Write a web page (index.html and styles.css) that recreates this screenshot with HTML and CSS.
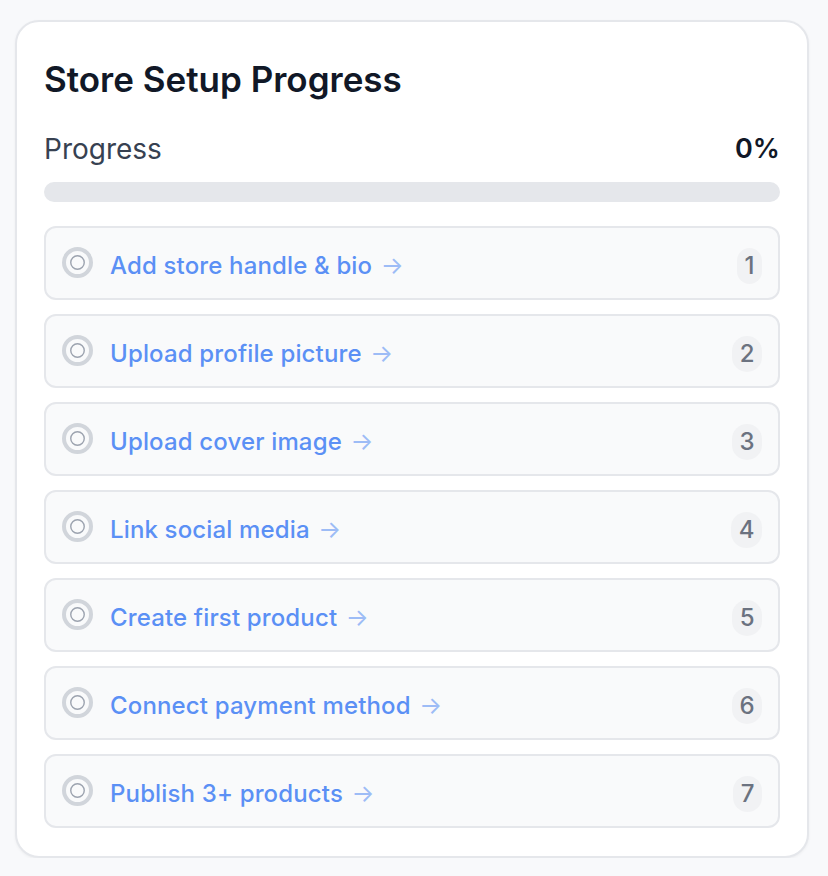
FILE: index.html
```html
<!DOCTYPE html>
<html lang="en">
<head>
<meta charset="utf-8">
<title>Store Setup Progress</title>
<link rel="stylesheet" href="styles.css">
</head>
<body>
<section class="card">
  <h2 class="title">Store Setup Progress</h2>
  <div class="progress-row">
    <span class="progress-label">Progress</span>
    <span class="progress-value">0%</span>
  </div>
  <div class="bar"><div class="bar-fill" style="width:0%"></div></div>
  <ul class="steps">
    <li class="step">
      <svg class="step-icon" width="31" height="31" viewBox="0 0 31 31"><circle cx="15.5" cy="15.5" r="13.5" fill="none" stroke="#d1d5db" stroke-width="4"/><circle cx="15.5" cy="15.5" r="6.75" fill="none" stroke="#9ca3af" stroke-width="1.4"/></svg>
      <a class="step-link" href="#">Add store handle &amp; bio <span class="arrow">→</span></a>
      <span class="badge">1</span>
    </li>
    <li class="step">
      <svg class="step-icon" width="31" height="31" viewBox="0 0 31 31"><circle cx="15.5" cy="15.5" r="13.5" fill="none" stroke="#d1d5db" stroke-width="4"/><circle cx="15.5" cy="15.5" r="6.75" fill="none" stroke="#9ca3af" stroke-width="1.4"/></svg>
      <a class="step-link" href="#">Upload profile picture <span class="arrow">→</span></a>
      <span class="badge">2</span>
    </li>
    <li class="step">
      <svg class="step-icon" width="31" height="31" viewBox="0 0 31 31"><circle cx="15.5" cy="15.5" r="13.5" fill="none" stroke="#d1d5db" stroke-width="4"/><circle cx="15.5" cy="15.5" r="6.75" fill="none" stroke="#9ca3af" stroke-width="1.4"/></svg>
      <a class="step-link" href="#">Upload cover image <span class="arrow">→</span></a>
      <span class="badge">3</span>
    </li>
    <li class="step">
      <svg class="step-icon" width="31" height="31" viewBox="0 0 31 31"><circle cx="15.5" cy="15.5" r="13.5" fill="none" stroke="#d1d5db" stroke-width="4"/><circle cx="15.5" cy="15.5" r="6.75" fill="none" stroke="#9ca3af" stroke-width="1.4"/></svg>
      <a class="step-link" href="#">Link social media <span class="arrow">→</span></a>
      <span class="badge">4</span>
    </li>
    <li class="step">
      <svg class="step-icon" width="31" height="31" viewBox="0 0 31 31"><circle cx="15.5" cy="15.5" r="13.5" fill="none" stroke="#d1d5db" stroke-width="4"/><circle cx="15.5" cy="15.5" r="6.75" fill="none" stroke="#9ca3af" stroke-width="1.4"/></svg>
      <a class="step-link" href="#">Create first product <span class="arrow">→</span></a>
      <span class="badge">5</span>
    </li>
    <li class="step">
      <svg class="step-icon" width="31" height="31" viewBox="0 0 31 31"><circle cx="15.5" cy="15.5" r="13.5" fill="none" stroke="#d1d5db" stroke-width="4"/><circle cx="15.5" cy="15.5" r="6.75" fill="none" stroke="#9ca3af" stroke-width="1.4"/></svg>
      <a class="step-link" href="#">Connect payment method <span class="arrow">→</span></a>
      <span class="badge">6</span>
    </li>
    <li class="step">
      <svg class="step-icon" width="31" height="31" viewBox="0 0 31 31"><circle cx="15.5" cy="15.5" r="13.5" fill="none" stroke="#d1d5db" stroke-width="4"/><circle cx="15.5" cy="15.5" r="6.75" fill="none" stroke="#9ca3af" stroke-width="1.4"/></svg>
      <a class="step-link" href="#">Publish 3+ products <span class="arrow">→</span></a>
      <span class="badge">7</span>
    </li>
  </ul>
</section>
</body>
</html>
```
FILE: styles.css
```css
* { box-sizing: border-box; }
html, body { margin: 0; padding: 0; }
body {
  background: #f8f9fb;
  font-family: Inter, "Noto Sans", sans-serif;
  color: #111827;
}
.card {
  width: 794px;
  margin: 20px 0 0 15px;
  background: #fff;
  border: 2px solid #e5e7eb;
  border-radius: 24px;
  box-shadow: 0 1px 3px rgba(0,0,0,0.05);
  padding: 27px 27px 28px 27px;
}
.title {
  margin: 10px 0 0 0;
  font-size: 35px;
  line-height: 40px;
  font-weight: 600;
  color: #111827;
  letter-spacing: 0;
}
.progress-row {
  margin-top: 32px;
  display: flex;
  justify-content: space-between;
  align-items: center;
  font-size: 28px;
  line-height: 36px;
}
.progress-label { color: #374151; font-weight: 400; }
.progress-value { color: #111827; font-weight: 600; font-size: 27px; }
.bar {
  margin-top: 15px;
  height: 20px;
  background: #e5e7eb;
  border-radius: 999px;
  overflow: hidden;
}
.bar-fill { height: 100%; background: #3b82f6; }
.steps {
  list-style: none;
  margin: 24px 0 0 0;
  padding: 0;
  display: flex;
  flex-direction: column;
  gap: 14px;
}
.step {
  display: flex;
  align-items: flex-start;
  gap: 17px;
  background: #f9fafb;
  border: 2px solid #e5e7eb;
  border-radius: 12px;
  padding: 20px 16px 14px 16px;
}
.step-icon { flex: none; display: block; margin-top: -1px; }
.step-link {
  flex: 1;
  font-size: 24px;
  line-height: 36px;
  font-weight: 500;
  letter-spacing: 0.15px;
  color: #5b90f5;
  text-decoration: none;
}
.arrow { color: #9dbcf6; font-weight: 400; margin-left: 2px; }
.badge {
  flex: none;
  font-size: 24px;
  line-height: 36px;
  font-weight: 500;
  color: #6b7280;
  background: #f1f2f4;
  border-radius: 999px;
  padding: 0 7.5px;
}
```
